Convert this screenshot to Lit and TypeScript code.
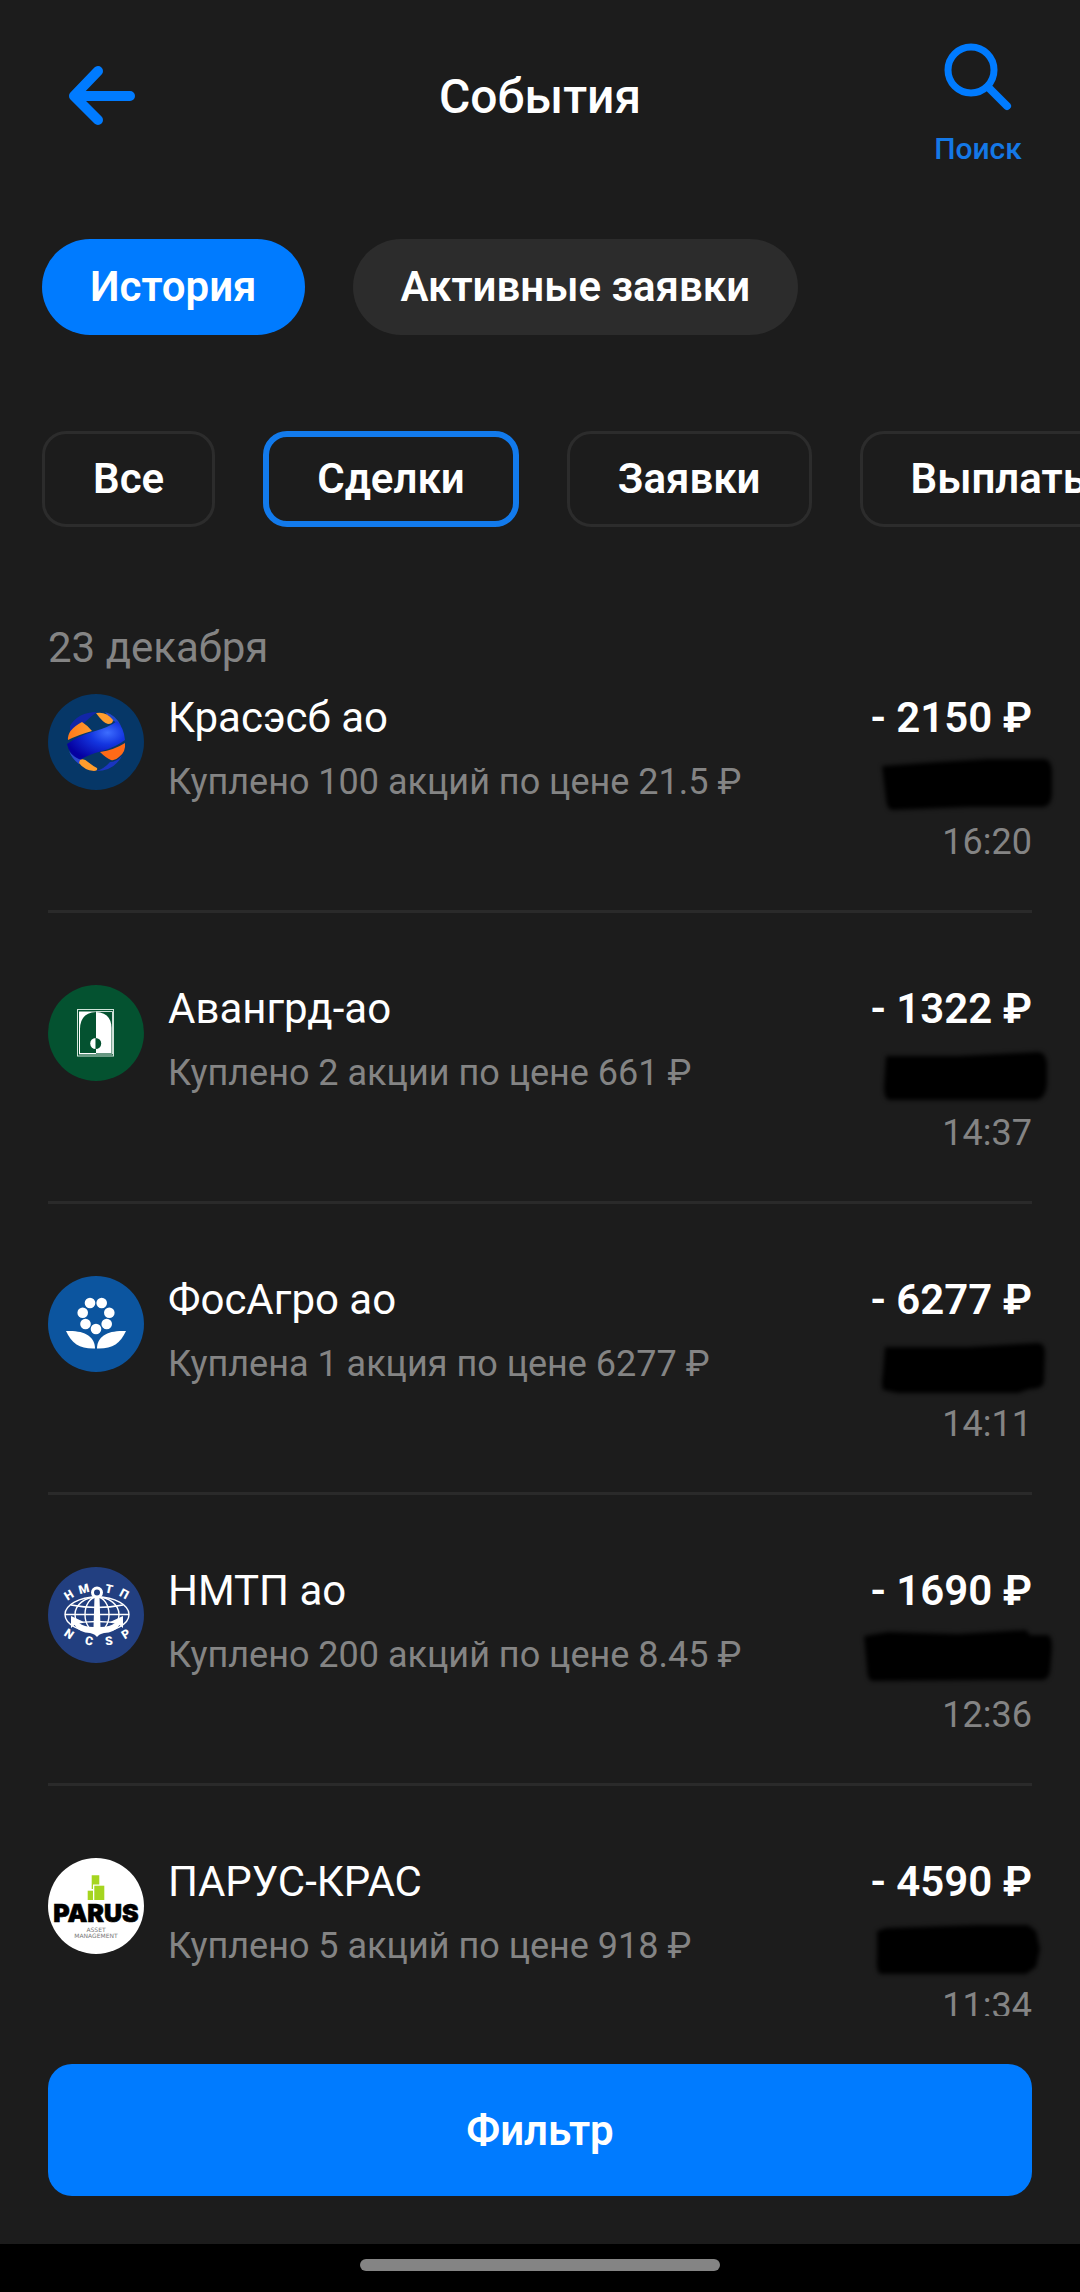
import { LitElement, html, css, svg, type SVGTemplateResult } from "lit";
import { customElement, property, state } from "lit/decorators.js";
import { classMap } from "lit/directives/class-map.js";

interface Deal {
  logo: string;
  name: string;
  note: string;
  amount: string;
  time: string;
  /** Outline of the marker stroke that hides the balance, in a 200×60 box. */
  cover: string;
}

const DEALS: Deal[] = [
  {
    logo: "krasesb",
    name: "Красэсб ао",
    note: "Куплено 100 акций по цене 21.5 ₽",
    amount: "- 2150 ₽",
    time: "16:20",
    cover: "M24 15 L80 11 L130 8 H186 Q193 8 194 20 V42 Q194 54 186 56 H110 L34 59 Q29 59 28 48 Z",
  },
  {
    logo: "avangard",
    name: "Авангрд-ао",
    note: "Куплено 2 акции по цене 661 ₽",
    amount: "- 1322 ₽",
    time: "14:37",
    cover: "M28 14 L100 14 L180 10 Q188 10 189 22 V41 Q188 57 178 58 H32 Q26 58 26 45 Z",
  },
  {
    logo: "phosagro",
    name: "ФосАгро ао",
    note: "Куплена 1 акция по цене 6277 ₽",
    amount: "- 6277 ₽",
    time: "14:11",
    cover: "M27 14 L110 14 L180 10 Q187 10 187 20 L186 50 Q184 56 172 56 L160 60 H40 L25 57 Q23 52 25 40 Z",
  },
  {
    logo: "nmtp",
    name: "НМТП ао",
    note: "Куплено 200 акций по цене 8.45 ₽",
    amount: "- 1690 ₽",
    time: "12:36",
    cover: "M6 12 L30 8 L100 10 L168 6 L172 11 L190 11 Q194 12 194 24 L192 48 Q190 56 184 56 H130 L14 57 Q9 56 9 44 Z",
  },
  {
    logo: "parus",
    name: "ПАРУС-КРАС",
    note: "Куплено 5 акций по цене 918 ₽",
    amount: "- 4590 ₽",
    time: "11:34",
    cover: "M19 16 L28 13 L120 10 L170 10 L178 16 L182 34 L178 52 L168 59 L22 59 Q18 56 19 42 Z",
  },
];

const LOGOS: Record<string, SVGTemplateResult> = {
  krasesb: svg`
    <defs>
      <radialGradient id="band" cx="0.7" cy="0.3" r="0.75">
        <stop offset="0" stop-color="#3d6dff" />
        <stop offset="0.4" stop-color="#1436e0" />
        <stop offset="1" stop-color="#0500a0" />
      </radialGradient>
      <linearGradient id="flame" x1="0" y1="0" x2="1" y2="0">
        <stop offset="0" stop-color="#ff7a1c" />
        <stop offset="1" stop-color="#ff9a2c" />
      </linearGradient>
    </defs>
    <circle cx="48" cy="48" r="48" fill="#063767" />
    <path d="M22 32 Q30 18 49 18 Q42 23 36 29 Q27 31 22 39Z" fill="#1226a8" />
    <path d="M57 18 Q68 21 73 32 Q68 27 64 27Z" fill="#2347c8" />
    <path d="M20 46 Q19 36 34 28 Q39 31 44 37 Q30 41 20 46Z" fill="url(#flame)" />
    <path d="M48 19 Q58 17 65 26 Q65 30 60 30 Q55 29 48 19Z" fill="#ff9d2e" />
    <path d="M19 50 Q30 42 44 38 Q62 33 69 27 Q76 34 77 46 Q68 53 54 57 Q39 61 32 66 Q21 61 19 50Z" fill="url(#band)" />
    <path d="M77 49 Q78 58 71 63 Q67 67 63 66 Q58 64 52 58 Q66 56 77 49Z" fill="#ff6a18" />
    <path d="M48 77 Q66 77 74 62 Q68 68 62 68 Q56 75 48 77Z" fill="#1a35c0" />
    <path d="M21 57 Q24 65 31 70 L34 66 Q26 64 21 57Z" fill="#2a48d0" />
    <path d="M32 66 Q36 64 40 68 Q45 72 49 74 Q50 77 46 77 Q36 76 31 69Z" fill="#ff9d2e" />`,
  avangard: svg`
    <circle cx="48" cy="48" r="48" fill="#045230" />
    <rect x="29.500" y="24.500" width="36" height="46.500" fill="none" stroke="#cfe3d8" stroke-width="1" />
    <path d="M31 26.500H48V27Q32 28 32 44V68H48V69H31Z" fill="#fff" />
    <path d="M48 27Q63.500 28 63.500 43V68H48Z" fill="#fff" />
    <path d="M31 69H64.500V26.500H48" fill="none" stroke="#fff" stroke-width="0.800" />
    <path d="M47.700 53A5.500 5.500 0 0 0 47.700 64Z" fill="#fff" />
    <path d="M47.700 53A5.500 5.500 0 0 1 47.700 64Z" fill="#045230" />`,
  phosagro: svg`
    <circle cx="48" cy="48" r="48" fill="#0c559f" />
    <g fill="#fff">
      <circle cx="42" cy="27" r="5.300" /><circle cx="53.700" cy="27" r="5.300" />
      <circle cx="34.700" cy="36.700" r="5.300" /><circle cx="61.300" cy="36.700" r="5.300" />
      <circle cx="37.500" cy="48" r="5.300" /><circle cx="58.700" cy="48" r="5.300" />
      <circle cx="48" cy="53" r="5.300" />
      <path d="M18 55 C36 54 47 60 47 72.500 C32 73 24 68 18 55Z" />
      <path d="M78 55 C60 54 49 60 49 72.500 C64 73 72 68 78 55Z" />
    </g>`,
  nmtp: svg`
    <circle cx="48" cy="48" r="48" fill="#223f80" />
    <g fill="none" stroke="#fff" stroke-width="1.400">
      <ellipse cx="49" cy="47.500" rx="32" ry="17.500" />
      <ellipse cx="49" cy="47.500" rx="22" ry="17.500" />
      <ellipse cx="49" cy="47.500" rx="12" ry="17.500" />
      <path d="M17 47.500H81M23 38Q49 43 75 38M23 57Q49 52 75 57" />
      <circle cx="49" cy="25.500" r="4.500" stroke-width="3" />
    </g>
    <path d="M46.500 30H51.500L52.500 60Q62 60 67 56L62 55L75 49L75 61L71.500 58Q66 66 56 66Q51 67 49 70Q47 67 42 66Q32 66 26.500 58L23 61L23 49L36 55L31 56Q36 60 45.500 60Z" fill="#fff" />
    <g class="ring">
      <text transform="translate(21 28) rotate(-32)" y="4">Н</text>
      <text transform="translate(36 22) rotate(-14)" y="4">М</text>
      <text transform="translate(61 22) rotate(12)" y="4">Т</text>
      <text transform="translate(76 27) rotate(28)" y="4">П</text>
      <text transform="translate(21 67) rotate(34)" y="4">N</text>
      <text transform="translate(41 74) rotate(10)" y="4">C</text>
      <text transform="translate(61 74) rotate(-8)" y="4">S</text>
      <text transform="translate(78 67) rotate(-32)" y="4">P</text>
    </g>`,
  parus: svg`
    <circle cx="48" cy="48" r="48" fill="#fff" />
    <g fill="#a5d51f">
      <path d="M43.700 17.300H51.300V26.500H45V31H43.700Z" />
      <rect x="46.300" y="27.700" width="10" height="14.300" />
      <rect x="39.700" y="32.700" width="5.300" height="9.300" />
    </g>
    <text class="parus" x="48" y="64">PARUS</text>
    <text class="tiny" x="48" y="74">ASSET</text>
    <text class="tiny" x="48" y="80">MANAGEMENT</text>`,
};

@customElement("deal-row")
class DealRow extends LitElement {
  @property({ attribute: false }) deal!: Deal;

  static styles = css`
    :host {
      display: block;
    }
    .row {
      display: grid;
      grid-template-columns: 96px 1fr auto;
      column-gap: 24px;
      align-items: start;
      padding-bottom: 44px;
      border-bottom: 3px solid #2a2a2a;
      line-height: 48px;
    }
    .logo {
      display: block;
      width: 96px;
      height: 96px;
    }
    .ring {
      font: 900 12px Roboto, sans-serif;
      fill: #fff;
      text-anchor: middle;
    }
    .parus {
      font: 900 25px Inter, sans-serif;
      fill: #000;
      stroke: #000;
      stroke-width: 0.6px;
      text-anchor: middle;
    }
    .tiny {
      font: 400 6px "DejaVu Sans", sans-serif;
      fill: #777;
      text-anchor: middle;
    }
    .about {
      display: grid;
      row-gap: 16px;
      min-width: 0;
    }
    .name,
    .note {
      margin: 0;
    }
    .name {
      font-size: 42px;
      font-weight: 400;
      color: #fff;
    }
    .note {
      font-size: 36px;
      color: #848484;
    }
    .sums {
      display: grid;
      row-gap: 12px;
      justify-items: end;
    }
    .amount {
      font-size: 42px;
      font-weight: 600;
      color: #fff;
    }
    .cover {
      display: block;
      width: 200px;
      height: 52px;
      margin-right: -26px;
      overflow: visible;
      filter: blur(2px);
    }
    .time {
      font-size: 36px;
      color: #848484;
    }
  `;

  render() {
    const d = this.deal;
    return html`
      <article class="row">
        <svg class="logo" viewBox="0 0 96 96" aria-hidden="true">${LOGOS[d.logo]}</svg>
        <div class="about">
          <h3 class="name">${d.name}</h3>
          <p class="note">${d.note}</p>
        </div>
        <div class="sums">
          <span class="amount">${d.amount}</span>
          <svg class="cover" viewBox="0 3 200 52" aria-hidden="true"><path d=${d.cover} fill="#000" /></svg>
          <time class="time">${d.time}</time>
        </div>
      </article>
    `;
  }
}

@customElement("app-root")
class AppRoot extends LitElement {
  @state() private tab = "История";
  @state() private kind = "Сделки";

  static styles = css`
    :host {
      display: flex;
      flex-direction: column;
      height: 100vh;
      overflow: hidden;
      background: #1c1c1c;
      color: #fff;
      font-family: Roboto, "Noto Sans", sans-serif;
    }
    button {
      font: inherit;
      color: inherit;
      background: none;
      border: 0;
      margin: 0;
      padding: 0;
      cursor: pointer;
    }
    .header {
      flex: none;
      display: grid;
      grid-template-columns: 108px 1fr 108px;
      align-items: center;
      min-height: 191px;
      padding: 0 48px;
    }
    .icon {
      display: block;
      width: 72px;
      height: 72px;
      fill: none;
      stroke: #007bff;
      stroke-linecap: round;
      stroke-linejoin: round;
    }
    .back,
    .search {
      display: flex;
      flex-direction: column;
      align-items: center;
    }
    .search {
      gap: 18px;
      padding-top: 16px;
      font-size: 30px;
      font-weight: 500;
      line-height: 36px;
      color: #1478e6;
    }
    .title {
      margin: 0;
      padding-top: 2px;
      text-align: center;
      font-size: 48px;
      font-weight: 500;
      line-height: 56px;
    }
    .tabs,
    .kinds {
      flex: none;
      display: flex;
      gap: 48px;
      padding: 0 42px;
      overflow: hidden;
      font-size: 42px;
      font-weight: 600;
      line-height: 48px;
      white-space: nowrap;
    }
    .tabs {
      margin-top: 48px;
    }
    .tab {
      flex: none;
      height: 96px;
      padding: 0 48px;
      border-radius: 48px;
      background: #2c2c2c;
    }
    .tab.on {
      background: #007bff;
    }
    .kinds {
      margin-top: 96px;
    }
    .kind {
      flex: none;
      height: 96px;
      padding: 0 48px;
      border: 3px solid #2c2c2c;
      border-radius: 24px;
    }
    .kind.on {
      border: 6px solid #127aec;
    }
    .feed {
      flex: 1;
      min-height: 0;
      overflow: hidden;
      padding: 97px 48px 0;
    }
    .date {
      margin: 0 0 22px;
      font-size: 42px;
      font-weight: 400;
      line-height: 48px;
      color: #848484;
    }
    .list {
      display: grid;
      gap: 72px;
      margin: 0;
      padding: 0;
      list-style: none;
    }
    .footer {
      flex: none;
      padding: 48px;
    }
    .filter {
      display: block;
      width: 100%;
      height: 132px;
      border-radius: 24px;
      background: #007bff;
      font-size: 42px;
      font-weight: 600;
    }
    .system {
      flex: none;
      display: flex;
      justify-content: center;
      padding: 15px 0 21px;
      background: #000;
    }
    .handle {
      width: 33.333%;
      height: 12px;
      border-radius: 6px;
      background: #848484;
    }
  `;

  render() {
    return html`
      <header class="header">
        <button class="back" aria-label="Назад">
          <svg class="icon" viewBox="0 0 72 72" stroke-width="10"><path d="M32 11L8 36L32 60M8 36H64" /></svg>
        </button>
        <h1 class="title">События</h1>
        <button class="search">
          <svg class="icon" viewBox="0 0 72 72" stroke-width="7">
            <circle cx="29" cy="29" r="23" />
            <path d="M48 48L65 65" stroke-width="8" />
          </svg>
          <span>Поиск</span>
        </button>
      </header>
      <nav class="tabs">
        ${["История", "Активные заявки"].map(
          (t) => html`<button class=${classMap({ tab: true, on: t === this.tab })} @click=${() => (this.tab = t)}>${t}</button>`,
        )}
      </nav>
      <nav class="kinds">
        ${["Все", "Сделки", "Заявки", "Выплаты"].map(
          (k) => html`<button class=${classMap({ kind: true, on: k === this.kind })} @click=${() => (this.kind = k)}>${k}</button>`,
        )}
      </nav>
      <main class="feed">
        <h2 class="date">23 декабря</h2>
        <ul class="list">
          ${DEALS.map((d) => html`<li><deal-row .deal=${d}></deal-row></li>`)}
        </ul>
      </main>
      <footer class="footer">
        <button class="filter">Фильтр</button>
      </footer>
      <div class="system"><div class="handle"></div></div>
    `;
  }
}
